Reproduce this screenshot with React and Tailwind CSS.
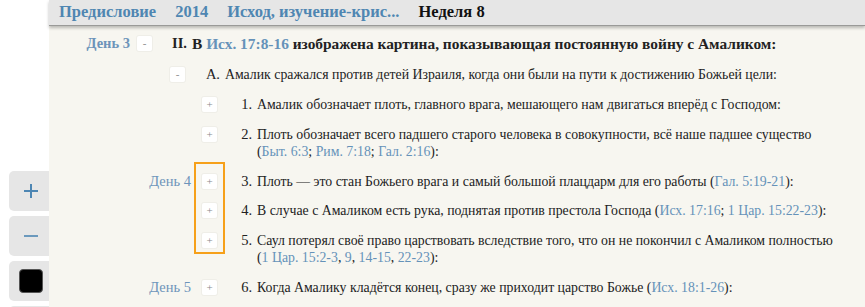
import React from "react";

const serif = { fontFamily: "'Liberation Serif', serif" };

function Ref({ children }) {
  return <span className="text-[#6592b9]">{children}</span>;
}

function Toggle({ sign }) {
  return (
    <div className="flex h-[15px] w-[15px] shrink-0 items-center justify-center rounded-[2px] bg-white text-[11px] leading-none text-[#8a8a8a] shadow-[0_0_0_1px_rgba(0,0,0,0.03)]">
      {sign}
    </div>
  );
}

function Item({ lead, gap = 7, day, dayBold, sign, num, bold, children }) {
  return (
    <div className="flex items-start leading-[17px]">
      <div
        className={
          "shrink-0 text-right text-[14.5px] text-[#6d94ba] " +
          (dayBold ? "font-bold" : "")
        }
        style={{ width: lead, paddingRight: gap }}
      >
        {day}
      </div>
      <div className="pt-[1px]">
        <Toggle sign={sign} />
      </div>
      <div
        className={
          "w-[40px] shrink-0 pr-[5px] text-right text-[14.5px] " +
          (bold ? "font-bold" : "")
        }
      >
        {num}
      </div>
      <div
        className={
          "whitespace-nowrap " + (bold ? "text-[15.4px] font-bold" : "")
        }
      >
        {children}
      </div>
    </div>
  );
}

function SideButton({ children }) {
  return (
    <div className="flex h-[40px] w-[46px] items-center justify-center rounded-[5px] bg-[#e6e6e6] pr-[3px]">
      {children}
    </div>
  );
}

export default function App() {
  return (
    <div
      className="flex h-[307px] w-[865px] overflow-hidden bg-white text-[13.8px] text-[#222]"
      style={serif}
    >
      <div className="w-[52px] shrink-0 pl-[9px] pt-[171px]">
        <div className="flex flex-col gap-[5px]">
          <SideButton>
            <svg width="18" height="18" viewBox="0 0 18 18">
              <path d="M9 2v14M2 9h14" stroke="#4d86b3" strokeWidth="2" />
            </svg>
          </SideButton>
          <SideButton>
            <svg width="16" height="4" viewBox="0 0 16 4">
              <path d="M1 2h14" stroke="#4d86b3" strokeWidth="1.6" />
            </svg>
          </SideButton>
          <SideButton>
            <div className="h-[24px] w-[24px] rounded-[4px] border border-[#555] bg-black" />
          </SideButton>
          <SideButton />
        </div>
      </div>

      <div className="relative z-10 -ml-[3px] flex-1 bg-[#f7f6f0]">
        <div className="flex h-[26px] items-center gap-[19px] border-b border-[#9a9a98] bg-[#e6e6e6] pl-[10px] text-[16.5px] font-bold shadow-[0_2px_3px_rgba(0,0,0,0.25)]">
          <span className="text-[#4f86b2]">Предисловие</span>
          <span className="text-[#4f86b2]">2014</span>
          <span className="text-[#4f86b2]">Исход, изучение-крис...</span>
          <span className="text-[#111]">Неделя 8</span>
        </div>

        <div className="flex flex-col gap-[12.9px] pl-[3px] pt-[9px]">
          <Item lead={85} day="День 3" dayBold sign="-" num="II." bold>
            В <Ref>Исх. 17:8-16</Ref> изображена картина, показывающая
            постоянную войну с Амаликом:
          </Item>
          <div className="mt-[1px]">
            <Item lead={118} sign="-" num="A.">
              Амалик сражался против детей Израиля, когда они были на пути к
              достижению Божьей цели:
            </Item>
          </div>
          <Item lead={150} sign="+" num="1.">
            Амалик обозначает плоть, главного врага, мешающего нам двигаться
            вперёд с Господом:
          </Item>
          <Item lead={150} sign="+" num="2.">
            Плоть обозначает всего падшего старого человека в совокупности, всё
            наше падшее существо
            <br />(<Ref>Быт. 6:3</Ref>; <Ref>Рим. 7:18</Ref>;{" "}
            <Ref>Гал. 2:16</Ref>):
          </Item>
          <div className="relative">
            <div className="pointer-events-none absolute left-[142px] top-[-11px] h-[92px] w-[31px] border-2 border-[#f6a01a]" />
            <div className="flex flex-col gap-[12.9px]">
              <Item lead={150} gap={11} day="День 4" sign="+" num="3.">
                Плоть — это стан Божьего врага и самый большой плацдарм для его
                работы (<Ref>Гал. 5:19-21</Ref>):
              </Item>
              <Item lead={150} sign="+" num="4.">
                В случае с Амаликом есть рука, поднятая против престола Господа
                (<Ref>Исх. 17:16</Ref>; <Ref>1 Цар. 15:22-23</Ref>):
              </Item>
              <Item lead={150} sign="+" num="5.">
                Саул потерял своё право царствовать вследствие того, что он не
                покончил с Амаликом полностью
                <br />(<Ref>1 Цар. 15:2-3</Ref>, <Ref>9</Ref>,{" "}
                <Ref>14-15</Ref>, <Ref>22-23</Ref>):
              </Item>
            </div>
          </div>
          <Item lead={150} gap={11} day="День 5" sign="+" num="6.">
            Когда Амалику кладётся конец, сразу же приходит царство Божье (
            <Ref>Исх. 18:1-26</Ref>):
          </Item>
        </div>
      </div>
    </div>
  );
}
